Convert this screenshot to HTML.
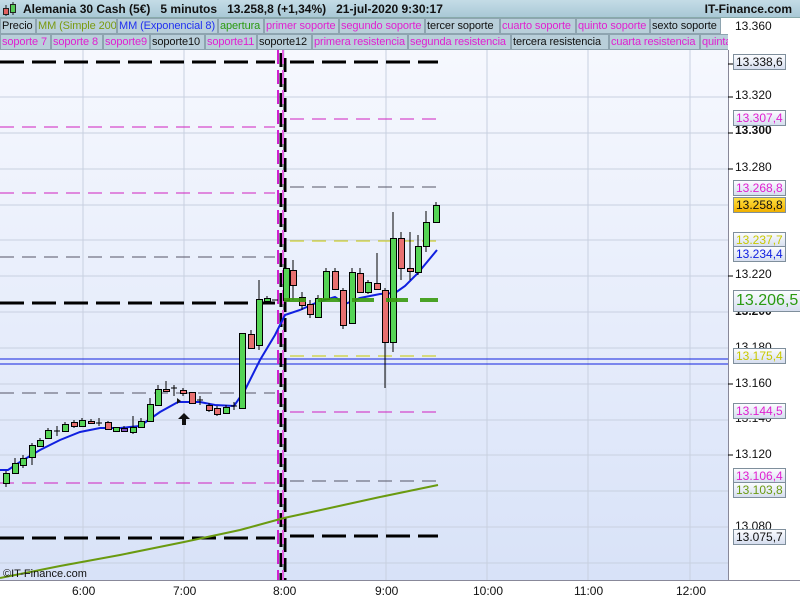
<!DOCTYPE html>
<html><head><meta charset="utf-8"><style>
*{margin:0;padding:0;box-sizing:border-box}
body{width:800px;height:600px;overflow:hidden;background:#fff;font-family:"Liberation Sans",sans-serif;position:relative}
#hdr{position:absolute;left:0;top:0;width:800px;height:18px;background:linear-gradient(#c4dce6,#a9c8d6);border-bottom:1px solid #8aa;font-size:12px;font-weight:bold;color:#111;line-height:18px}
.row{position:absolute;left:0;width:728px;height:16px;overflow:hidden}
.c{position:absolute;top:0;height:16px;background:#b9cfda;border:1px solid #8ea4b0;font-size:11px;line-height:14px;padding-left:1px;white-space:nowrap;overflow:hidden;letter-spacing:-0.1px}
.m{color:#e020d0}.k{color:#111}
.lab{position:absolute;left:733px;font-size:12px;height:16px;line-height:14px;padding:0 2px;min-width:45px;border:1px solid #7f8f9c;background:linear-gradient(#fbfcff,#d6deef);white-space:nowrap}
.t{position:absolute;left:735px;font-size:12px;color:#111}
.x{position:absolute;top:584px;font-size:12px;color:#111}
</style></head><body>
<div id="hdr">
<svg style="position:absolute;left:2px;top:2px" width="16" height="15"><line x1="4" y1="3" x2="4" y2="14" stroke="#222"/><rect x="1.5" y="6.5" width="5" height="6" fill="#e06060" stroke="#222"/><line x1="11" y1="0" x2="11" y2="13" stroke="#222"/><rect x="8.5" y="2.5" width="5" height="8" fill="#5c5" stroke="#222"/></svg>
<span style="position:absolute;left:23px">Alemania 30 Cash (5€)&nbsp;&nbsp;&nbsp;5 minutos&nbsp;&nbsp;&nbsp;13.258,8 (+1,34%)&nbsp;&nbsp;&nbsp;21-jul-2020 9:30:17</span>
<span style="position:absolute;right:8px">IT-Finance.com</span>
</div>
<div class="row" style="top:18px">
<div class="c k" style="left:0;width:36px">Precio</div>
<div class="c" style="left:36px;width:81px;color:#7a9a10">MM (Simple 200)</div>
<div class="c" style="left:117px;width:101px;color:#2030f0">MM (Exponencial 8)</div>
<div class="c" style="left:218px;width:46px;color:#2a9a10">apertura</div>
<div class="c m" style="left:264px;width:75px">primer soporte</div>
<div class="c m" style="left:339px;width:86px">segundo soporte</div>
<div class="c k" style="left:425px;width:75px">tercer soporte</div>
<div class="c m" style="left:500px;width:76px">cuarto soporte</div>
<div class="c m" style="left:576px;width:74px">quinto soporte</div>
<div class="c k" style="left:650px;width:71px">sexto soporte</div>
</div>
<div class="row" style="top:34px">
<div class="c m" style="left:0;width:51px">soporte 7</div>
<div class="c m" style="left:51px;width:52px">soporte 8</div>
<div class="c m" style="left:103px;width:47px">soporte9</div>
<div class="c k" style="left:150px;width:55px">soporte10</div>
<div class="c m" style="left:205px;width:52px">soporte11</div>
<div class="c k" style="left:257px;width:55px">soporte12</div>
<div class="c m" style="left:312px;width:96px">primera resistencia</div>
<div class="c m" style="left:408px;width:103px">segunda resistencia</div>
<div class="c k" style="left:511px;width:98px">tercera resistencia</div>
<div class="c m" style="left:609px;width:91px">cuarta resistencia</div>
<div class="c m" style="left:700px;width:40px">quinta resistencia</div>
</div>
<svg style="position:absolute;left:0;top:50px" width="800" height="550">
<defs><linearGradient id="bg" x1="0" y1="0" x2="0" y2="1"><stop offset="0" stop-color="#f6f8fe"/><stop offset="1" stop-color="#d8e2f8"/></linearGradient></defs>
<g transform="translate(0,-50)">
<rect x="0" y="50" width="728" height="530" fill="url(#bg)"/>
<line x1="728.5" y1="50" x2="728.5" y2="580" stroke="#889"/>
<line x1="0" y1="580.5" x2="800" y2="580.5" stroke="#889"/>
<g stroke="#c8d0e0" stroke-width="1">
<line x1="0" y1="97" x2="728" y2="97"/><line x1="0" y1="133" x2="728" y2="133"/><line x1="0" y1="169" x2="728" y2="169"/><line x1="0" y1="205" x2="728" y2="205"/><line x1="0" y1="240" x2="728" y2="240"/><line x1="0" y1="276" x2="728" y2="276"/><line x1="0" y1="312" x2="728" y2="312"/><line x1="0" y1="348" x2="728" y2="348"/><line x1="0" y1="384" x2="728" y2="384"/><line x1="0" y1="420" x2="728" y2="420"/><line x1="0" y1="455" x2="728" y2="455"/><line x1="0" y1="491" x2="728" y2="491"/><line x1="0" y1="527" x2="728" y2="527"/><line x1="0" y1="563" x2="728" y2="563"/>
<line x1="83" y1="50" x2="83" y2="580"/><line x1="184" y1="50" x2="184" y2="580"/><line x1="284" y1="50" x2="284" y2="580"/><line x1="386" y1="50" x2="386" y2="580"/><line x1="487" y1="50" x2="487" y2="580"/><line x1="588" y1="50" x2="588" y2="580"/><line x1="690" y1="50" x2="690" y2="580"/>
</g>
<g stroke-width="1" fill="none">
<line x1="728" y1="64" x2="733" y2="64" stroke="#000"/>
<line x1="0" y1="127" x2="275" y2="127" stroke="#d020c0" stroke-dasharray="14,8"/>
<line x1="0" y1="193" x2="275" y2="193" stroke="#d020c0" stroke-dasharray="14,8"/>
<line x1="0" y1="257" x2="275" y2="257" stroke="#556" stroke-dasharray="14,8"/>
<line x1="0" y1="393" x2="275" y2="393" stroke="#556" stroke-dasharray="14,8"/>
<line x1="0" y1="483" x2="275" y2="483" stroke="#d020c0" stroke-dasharray="14,8"/>
<line x1="290" y1="119" x2="438" y2="119" stroke="#d020c0" stroke-dasharray="14,8"/>
<line x1="290" y1="187" x2="438" y2="187" stroke="#556" stroke-dasharray="14,8"/>
<line x1="290" y1="241" x2="438" y2="241" stroke="#c8c800" stroke-dasharray="14,8"/>
<line x1="290" y1="356" x2="438" y2="356" stroke="#c8c800" stroke-dasharray="14,8"/>
<line x1="290" y1="412" x2="438" y2="412" stroke="#d020c0" stroke-dasharray="14,8"/>
<line x1="290" y1="481" x2="438" y2="481" stroke="#556" stroke-dasharray="14,8"/>
<line x1="0" y1="359" x2="728" y2="359" stroke="#1020e0"/>
<line x1="0" y1="364" x2="728" y2="364" stroke="#1020e0"/>
</g>
<g stroke="#000" stroke-width="3" stroke-dasharray="24,8">
<line x1="0" y1="62" x2="275" y2="62"/><line x1="290" y1="62" x2="438" y2="62"/>
<line x1="0" y1="303" x2="275" y2="303"/>
<line x1="0" y1="538" x2="275" y2="538"/><line x1="290" y1="536" x2="438" y2="536"/>
</g>
<g stroke-width="2" stroke-dasharray="14,6">
<line x1="278" y1="50" x2="278" y2="580" stroke="#d020d0"/>
<line x1="281" y1="53" x2="281" y2="580" stroke="#000" stroke-width="3"/>
<line x1="285" y1="58" x2="285" y2="580" stroke="#000" stroke-width="3"/>
<line x1="283" y1="50" x2="283" y2="580" stroke="#e060e0"/>
</g>
<polyline fill="none" stroke="#6a9a10" stroke-width="2" points="0,578 60,566 120,555 184,542 240,530 284,518 330,508 380,497 438,485"/>
<polyline fill="none" stroke="#1020e0" stroke-width="2" points="0,470 8,470 20,462 40,450 60,440 80,432 100,428 120,428 140,426 160,412 178,402 200,402 215,405 234,406 245,390 260,360 275,335 285,315 300,310 318,302 335,297 345,304 360,298 380,294 395,293 405,286 418,273 437,250"/>
<g stroke="#000" stroke-width="1">
<line x1="286" y1="258" x2="286" y2="305"/><line x1="293" y1="260" x2="293" y2="300"/><line x1="302" y1="292" x2="302" y2="310"/><line x1="310" y1="300" x2="310" y2="318"/><line x1="318" y1="295" x2="318" y2="318"/><line x1="326" y1="268" x2="326" y2="300"/><line x1="335" y1="268" x2="335" y2="290"/><line x1="343" y1="288" x2="343" y2="329"/><line x1="352" y1="268" x2="352" y2="324"/><line x1="360" y1="268" x2="360" y2="293"/><line x1="368" y1="280" x2="368" y2="294"/><line x1="377" y1="253" x2="377" y2="290"/><line x1="385" y1="288" x2="385" y2="388"/><line x1="393" y1="212" x2="393" y2="352"/><line x1="401" y1="232" x2="401" y2="280"/><line x1="410" y1="232" x2="410" y2="280"/><line x1="418" y1="235" x2="418" y2="275"/><line x1="426" y1="211" x2="426" y2="252"/><line x1="436" y1="202" x2="436" y2="222"/>
<line x1="6" y1="471" x2="6" y2="487"/><line x1="15" y1="458" x2="15" y2="474"/><line x1="23" y1="455" x2="23" y2="468"/><line x1="32" y1="443" x2="32" y2="465"/><line x1="40" y1="438" x2="40" y2="447"/><line x1="48" y1="428" x2="48" y2="439"/><line x1="57" y1="426" x2="57" y2="436"/><line x1="65" y1="422" x2="65" y2="431"/><line x1="74" y1="420" x2="74" y2="428"/><line x1="82" y1="418" x2="82" y2="426"/><line x1="91" y1="419" x2="91" y2="424"/><line x1="99" y1="418" x2="99" y2="426"/><line x1="108" y1="421" x2="108" y2="430"/><line x1="124" y1="426" x2="124" y2="432"/><line x1="133" y1="416" x2="133" y2="434"/><line x1="141" y1="418" x2="141" y2="428"/><line x1="150" y1="398" x2="150" y2="422"/><line x1="158" y1="385" x2="158" y2="406"/><line x1="166" y1="381" x2="166" y2="392"/><line x1="174" y1="385" x2="174" y2="396"/><line x1="183" y1="388" x2="183" y2="396"/><line x1="192" y1="392" x2="192" y2="404"/><line x1="200" y1="396" x2="200" y2="405"/><line x1="209" y1="403" x2="209" y2="412"/><line x1="217" y1="406" x2="217" y2="416"/><line x1="226" y1="405" x2="226" y2="414"/><line x1="234" y1="402" x2="234" y2="410"/><line x1="251" y1="330" x2="251" y2="349"/><line x1="259" y1="280" x2="259" y2="350"/><line x1="267" y1="296" x2="267" y2="303"/>
<line x1="54" y1="431" x2="60" y2="431"/><line x1="96" y1="423" x2="102" y2="423"/><line x1="171" y1="388" x2="177" y2="388"/><line x1="197" y1="400" x2="203" y2="400"/><line x1="231" y1="406" x2="237" y2="406"/><line x1="272" y1="300" x2="278" y2="300"/>
</g>
<g stroke="#000" stroke-width="1" fill="#55d455">
<rect x="283.5" y="268.5" width="6" height="32"/><rect x="315.5" y="298.5" width="6" height="19"/><rect x="323.5" y="271.5" width="6" height="28"/><rect x="349.5" y="272.5" width="6" height="51"/><rect x="365.5" y="282.5" width="6" height="10"/><rect x="390.5" y="238.5" width="6" height="104"/><rect x="415.5" y="246.5" width="6" height="26"/><rect x="423.5" y="222.5" width="6" height="24"/><rect x="433.5" y="205.5" width="6" height="17"/>
<rect x="3.5" y="473.5" width="6" height="10"/><rect x="12.5" y="463.5" width="6" height="10"/><rect x="20.5" y="458.5" width="6" height="7"/><rect x="29.5" y="445.5" width="6" height="12"/><rect x="37.5" y="440.5" width="6" height="6"/><rect x="45.5" y="430.5" width="6" height="8"/><rect x="62.5" y="424.5" width="6" height="7"/><rect x="79.5" y="420.5" width="6" height="6"/><rect x="113.5" y="427.5" width="6" height="4"/><rect x="130.5" y="427.5" width="6" height="5"/><rect x="138.5" y="421.5" width="6" height="6"/><rect x="147.5" y="404.5" width="6" height="17"/><rect x="155.5" y="389.5" width="6" height="16"/><rect x="223.5" y="407.5" width="6" height="6"/><rect x="239.5" y="333.5" width="6" height="75"/><rect x="256.5" y="299.5" width="6" height="46"/><rect x="264.5" y="298.5" width="6" height="3"/>
</g>
<g stroke="#000" stroke-width="1" fill="#e87070">
<rect x="290.5" y="270.5" width="6" height="15"/><rect x="299.5" y="297.5" width="6" height="8"/><rect x="307.5" y="304.5" width="6" height="10"/><rect x="332.5" y="271.5" width="6" height="18"/><rect x="340.5" y="290.5" width="6" height="35"/><rect x="357.5" y="273.5" width="6" height="19"/><rect x="374.5" y="283.5" width="6" height="6"/><rect x="382.5" y="290.5" width="6" height="52"/><rect x="398.5" y="238.5" width="6" height="30"/><rect x="407.5" y="268.5" width="6" height="3"/>
<rect x="71.5" y="422.5" width="6" height="4"/><rect x="88.5" y="421.5" width="6" height="2"/><rect x="105.5" y="422.5" width="6" height="7"/><rect x="163.5" y="389.5" width="6" height="2"/><rect x="180.5" y="390.5" width="6" height="3"/><rect x="189.5" y="392.5" width="6" height="11"/><rect x="206.5" y="405.5" width="6" height="5"/><rect x="214.5" y="408.5" width="6" height="6"/><rect x="248.5" y="334.5" width="6" height="14"/>
</g>
<line x1="284" y1="300" x2="438" y2="300" stroke="#3a9a10" stroke-width="4" stroke-dasharray="22,12" opacity="0.9"/>
<rect x="121.5" y="428.5" width="6" height="3" fill="#8050c0" stroke="#000"/>
<path d="M184,413 L178,419 L182,419 L182,425 L186,425 L186,419 L190,419 Z" fill="#111"/>
<path d="M177,398 L181,401 L177,404 Z" fill="#111"/>
<g font-size="11" fill="#111" font-family="Liberation Sans,sans-serif">
<text x="3" y="577">©IT-Finance.com</text>
</g>
<g stroke="#000"><line x1="728" y1="27" x2="733" y2="27"/><line x1="728" y1="97" x2="733" y2="97"/><line x1="728" y1="169" x2="733" y2="169"/><line x1="728" y1="276" x2="733" y2="276"/><line x1="728" y1="384" x2="733" y2="384"/><line x1="728" y1="455" x2="733" y2="455"/><line x1="728" y1="133" x2="733" y2="133"/></g>
</g></svg>
<div class="t" style="top:19px">13.360</div>
<div class="t" style="top:88px">13.320</div>
<div class="t" style="top:123px;font-weight:bold">13.300</div>
<div class="t" style="top:160px">13.280</div>
<div class="t" style="top:267px">13.220</div>
<div class="t" style="top:304px;font-weight:bold">13.200</div>
<div class="t" style="top:340px">13.180</div>
<div class="t" style="top:376px">13.160</div>
<div class="t" style="top:411px">13.140</div>
<div class="t" style="top:447px">13.120</div>
<div class="t" style="top:519px">13.080</div>
<div class="lab" style="top:54px;color:#111">13.338,6</div>
<div class="lab" style="top:110px;color:#e020d0">13.307,4</div>
<div class="lab" style="top:180px;color:#e020d0">13.268,8</div>
<div class="lab" style="top:197px;color:#111;background:linear-gradient(#ffe040,#f0b000)">13.258,8</div>
<div class="lab" style="top:232px;color:#c8c800">13.237,7</div>
<div class="lab" style="top:246px;color:#1020e0">13.234,4</div>
<div class="lab" style="top:290px;height:22px;line-height:20px;font-size:16px;color:#2a9a10">13.206,5</div>
<div class="lab" style="top:348px;color:#c8c800">13.175,4</div>
<div class="lab" style="top:403px;color:#e020d0">13.144,5</div>
<div class="lab" style="top:468px;color:#e020d0">13.106,4</div>
<div class="lab" style="top:482px;color:#6a9a10">13.103,8</div>
<div class="lab" style="top:529px;color:#111">13.075,7</div>
<div class="x" style="left:72px">6:00</div>
<div class="x" style="left:173px">7:00</div>
<div class="x" style="left:273px">8:00</div>
<div class="x" style="left:375px">9:00</div>
<div class="x" style="left:473px">10:00</div>
<div class="x" style="left:574px">11:00</div>
<div class="x" style="left:676px">12:00</div>
</body></html>
